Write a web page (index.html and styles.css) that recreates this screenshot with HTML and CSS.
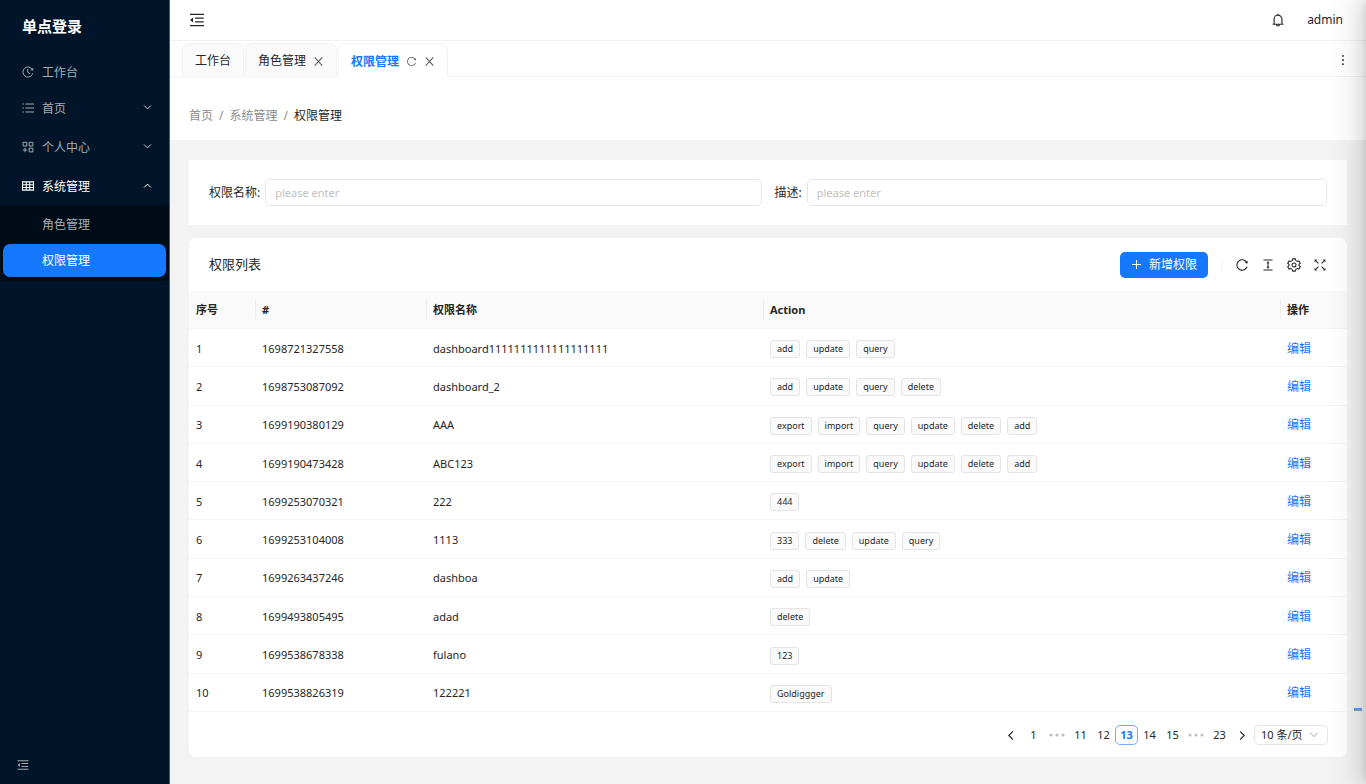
FILE: index.html
```html
<!DOCTYPE html>
<html lang="zh-CN">
<head>
<meta charset="utf-8">
<title>权限管理</title>
<link rel="stylesheet" href="styles.css">
</head>
<body>
<svg class="sprite" aria-hidden="true">
  <symbol id="fold" viewBox="0 0 1024 1024"><path fill="currentColor" d="M408 442h480c4.400 0 8-3.600 8-8v-56c0-4.400-3.600-8-8-8H408c-4.400 0-8 3.600-8 8v56c0 4.400 3.600 8 8 8zm-8 204c0 4.400 3.600 8 8 8h480c4.400 0 8-3.600 8-8v-56c0-4.400-3.600-8-8-8H408c-4.400 0-8 3.600-8 8v56zm504-486H120c-4.400 0-8 3.600-8 8v56c0 4.400 3.600 8 8 8h784c4.400 0 8-3.600 8-8v-56c0-4.400-3.600-8-8-8zm0 632H120c-4.400 0-8 3.600-8 8v56c0 4.400 3.600 8 8 8h784c4.400 0 8-3.600 8-8v-56c0-4.400-3.600-8-8-8zM115.400 518.900L271.700 642c5.800 4.600 14.400.5 14.400-6.900V388.900c0-7.400-8.500-11.500-14.400-6.900L115.400 505.100a8.740 8.740 0 000 13.800z"/></symbol>
  <symbol id="reload" viewBox="0 0 1024 1024"><path fill="currentColor" d="M909.1 209.300l-56.400 44.100C775.800 155.100 656.200 92 521.900 92 290 92 102.300 279.500 102 511.500 101.700 743.700 289.800 932 521.900 932c181.300 0 335.800-115 394.600-276.100 1.500-4.200-.7-8.900-4.900-10.300l-56.700-19.500a8 8 0 00-10.100 4.800c-1.800 5-3.800 10-5.900 14.900-17.300 41-42.100 77.800-73.700 109.400A344.770 344.770 0 01655.900 829c-42.300 17.900-87.400 27-133.800 27-46.500 0-91.500-9.100-133.800-27A341.500 341.500 0 01279 755.200a342.160 342.160 0 01-73.700-109.400c-17.900-42.400-27-87.400-27-133.900s9.100-91.500 27-133.900c17.300-41 42.100-77.800 73.700-109.400 31.600-31.600 68.400-56.400 109.300-73.800 42.300-17.900 87.400-27 133.800-27 46.500 0 91.500 9.100 133.800 27a341.500 341.500 0 01109.300 73.800c9.900 9.900 19.200 20.400 27.800 31.400l-60.200 47a8 8 0 003 14.100l175.600 43c5 1.200 9.900-2.600 9.900-7.700l.8-180.900c-.1-6.600-7.800-10.300-13-6.200z"/></symbol>
  <symbol id="height" viewBox="0 0 1024 1024"><path fill="currentColor" d="M840 836H184c-4.400 0-8 3.600-8 8v60c0 4.400 3.600 8 8 8h656c4.400 0 8-3.600 8-8v-60c0-4.400-3.600-8-8-8zm0-724H184c-4.400 0-8 3.600-8 8v60c0 4.400 3.600 8 8 8h656c4.400 0 8-3.600 8-8v-60c0-4.400-3.600-8-8-8zM610.800 378c6 0 9.400-7 5.700-11.700L515.700 238.700a7.140 7.140 0 00-11.300 0L403.600 366.300a7.230 7.230 0 005.700 11.700H476v268h-62.800c-6 0-9.400 7-5.700 11.700l100.800 127.500c2.900 3.700 8.500 3.700 11.300 0l100.800-127.500c3.700-4.700.4-11.700-5.700-11.700H548V378h62.800z"/></symbol>
  <symbol id="clock" viewBox="0 0 16 16"><g fill="none" stroke="currentColor" stroke-width="1.300"><path d="M13.500 11.800A6.700 6.700 0 1 1 13.300 4M7.700 4v4.500l3.200 1.800"/><path fill="currentColor" stroke="none" d="M15 2.300v4l-3.700-.9zM13 9.500l2 .4-.8 2z"/></g></symbol>
  <symbol id="list" viewBox="0 0 16 16"><path fill="none" stroke="currentColor" stroke-width="1.300" d="M4.500 2.700H16M4.500 8H16M4.500 13.300H16M.5 2.700h2M.5 8h2M.5 13.300h2"/></symbol>
  <symbol id="apps" viewBox="0 0 16 16"><path fill="none" stroke="currentColor" stroke-width="1.300" d="M1.400 1.700h5v5h-5zM9.500 1.700h5v5h-5zM9.500 9.500h5v5h-5zM4 9v6M1 12h6"/></symbol>
  <symbol id="grid" viewBox="0 0 16 16"><path fill="none" stroke="currentColor" stroke-width="1.400" d="M.7 2.500h14.600v11H.7zM.7 6.200h14.600M.7 9.900h14.600M5.700 2.500v11M10.300 2.500v11"/></symbol>
  <symbol id="down" viewBox="0 0 16 16"><path fill="none" stroke="currentColor" stroke-width="1.700" d="M2 4.500L8 10.500 14 4.500"/></symbol>
  <symbol id="close" viewBox="0 0 16 16"><path fill="none" stroke="currentColor" stroke-width="1.500" d="M2.500 2l11 12M13.500 2l-11 12"/></symbol>
  <symbol id="bell" viewBox="0 0 16 16"><path fill="none" stroke="currentColor" stroke-width="1.300" d="M8 .8v1.700M1.800 12.800h12.400M3.500 12.500V7a4.500 4.500 0 0 1 9 0v5.500M6.300 13.200a1.700 1.700 0 0 0 3.400 0"/></symbol>
  <symbol id="more" viewBox="0 0 16 16"><g fill="currentColor"><circle cx="8" cy="2.500" r="1.200"/><circle cx="8" cy="8" r="1.200"/><circle cx="8" cy="13.500" r="1.200"/></g></symbol>
  <symbol id="plus" viewBox="0 0 16 16"><path stroke="currentColor" stroke-width="1.400" d="M8 1.500v13M1.500 8h13"/></symbol>
  <symbol id="gear" viewBox="0 0 16 16"><g fill="none" stroke="currentColor" stroke-width="1.200" stroke-linejoin="round"><path d="M6.400 1h3.200l.5 2 1.500.9 2-.6 1.600 2.700-1.500 1.400v1.200l1.500 1.400-1.600 2.700-2-.6-1.500.9-.5 2H6.400l-.5-2-1.500-.9-2 .6L.8 10l1.500-1.400V7.400L.8 6l1.600-2.700 2 .6L5.900 3z"/><circle cx="8" cy="8" r="2.300"/></g></symbol>
  <symbol id="expand" viewBox="0 0 16 16"><g stroke="currentColor" stroke-width="1.200" fill="currentColor"><path d="M3 3l3.200 3.200M13 3L9.800 6.200M3 13l3.200-3.200M13 13L9.800 9.800"/><path stroke="none" d="M1.800 1.800h3L1.800 4.800zM14.200 1.800v3l-3-3zM1.800 14.200v-3l3 3zM14.200 14.200h-3l3-3z"/></g></symbol>
  <symbol id="dots" viewBox="0 0 16 6"><g fill="currentColor"><circle cx="2" cy="3" r="1.600"/><circle cx="8" cy="3" r="1.600"/><circle cx="14" cy="3" r="1.600"/></g></symbol>
</svg>

<div class="app">
  <aside class="side">
    <h1 class="brand">单点登录</h1>
    <nav class="menu">
      <a class="item" href="#"><svg><use href="#clock"/></svg><span>工作台</span></a>
      <button class="item item-group"><svg><use href="#list"/></svg><span>首页</span><svg class="arrow"><use href="#down"/></svg></button>
      <button class="item item-group"><svg><use href="#apps"/></svg><span>个人中心</span><svg class="arrow"><use href="#down"/></svg></button>
      <button class="item item-group open" aria-expanded="true"><svg><use href="#grid"/></svg><span>系统管理</span><svg class="arrow"><use href="#down"/></svg></button>
      <div class="sub">
        <a class="sub-item" href="#">角色管理</a>
        <a class="sub-item selected" href="#">权限管理</a>
      </div>
    </nav>
    <button class="side-fold" aria-label="收起菜单"><svg><use href="#fold"/></svg></button>
  </aside>

  <div class="main">
    <header class="top">
      <button class="icon-btn" aria-label="收起菜单"><svg class="i18"><use href="#fold"/></svg></button>
      <div class="user">
        <button class="icon-btn" aria-label="通知"><svg class="i14"><use href="#bell"/></svg></button>
        <a href="#" class="name">admin</a>
      </div>
    </header>
    <div class="tabs">
      <div class="tab"><a href="#">工作台</a></div>
      <div class="tab"><a href="#">角色管理</a><button class="tab-btn" aria-label="关闭"><svg><use href="#close"/></svg></button></div>
      <div class="tab active"><a href="#">权限管理</a><button class="tab-btn" aria-label="刷新"><svg><use href="#reload"/></svg></button><button class="tab-btn" aria-label="关闭"><svg><use href="#close"/></svg></button></div>
      <button class="icon-btn more" aria-label="更多"><svg class="i12"><use href="#more"/></svg></button>
    </div>
    <nav class="crumbs"><a href="#">首页</a><i>/</i><a href="#">系统管理</a><i>/</i><span>权限管理</span></nav>

    <main class="content">
      <form class="search">
        <div class="field"><label for="pname">权限名称:</label><input id="pname" type="text" placeholder="please enter"></div>
        <div class="field wide"><label for="pdesc">描述:</label><input id="pdesc" type="text" placeholder="please enter"></div>
      </form>

      <section class="card">
        <div class="toolbar">
          <h2>权限列表</h2>
          <button class="primary"><svg><use href="#plus"/></svg>新增权限</button>
          <span class="divider"></span>
          <div class="tools">
            <button class="icon-btn" aria-label="刷新"><svg class="i14"><use href="#reload"/></svg></button>
            <button class="icon-btn" aria-label="密度"><svg class="i14"><use href="#height"/></svg></button>
            <button class="icon-btn" aria-label="列设置"><svg class="i14"><use href="#gear"/></svg></button>
            <button class="icon-btn" aria-label="全屏"><svg class="i14"><use href="#expand"/></svg></button>
          </div>
        </div>
        <table>
          <colgroup><col class="c-index"><col class="c-id"><col class="c-name"><col><col class="c-op"></colgroup>
          <thead><tr><th>序号</th><th>#</th><th>权限名称</th><th>Action</th><th>操作</th></tr></thead>
          <tbody>
            <tr><td>1</td><td>1698721327558</td><td>dashboard1111111111111111111</td><td><span class="tag">add</span><span class="tag">update</span><span class="tag">query</span></td><td><a href="#">编辑</a></td></tr>
            <tr><td>2</td><td>1698753087092</td><td>dashboard_2</td><td><span class="tag">add</span><span class="tag">update</span><span class="tag">query</span><span class="tag">delete</span></td><td><a href="#">编辑</a></td></tr>
            <tr><td>3</td><td>1699190380129</td><td>AAA</td><td><span class="tag">export</span><span class="tag">import</span><span class="tag">query</span><span class="tag">update</span><span class="tag">delete</span><span class="tag">add</span></td><td><a href="#">编辑</a></td></tr>
            <tr><td>4</td><td>1699190473428</td><td>ABC123</td><td><span class="tag">export</span><span class="tag">import</span><span class="tag">query</span><span class="tag">update</span><span class="tag">delete</span><span class="tag">add</span></td><td><a href="#">编辑</a></td></tr>
            <tr><td>5</td><td>1699253070321</td><td>222</td><td><span class="tag">444</span></td><td><a href="#">编辑</a></td></tr>
            <tr><td>6</td><td>1699253104008</td><td>1113</td><td><span class="tag">333</span><span class="tag">delete</span><span class="tag">update</span><span class="tag">query</span></td><td><a href="#">编辑</a></td></tr>
            <tr><td>7</td><td>1699263437246</td><td>dashboa</td><td><span class="tag">add</span><span class="tag">update</span></td><td><a href="#">编辑</a></td></tr>
            <tr><td>8</td><td>1699493805495</td><td>adad</td><td><span class="tag">delete</span></td><td><a href="#">编辑</a></td></tr>
            <tr><td>9</td><td>1699538678338</td><td>fulano</td><td><span class="tag">123</span></td><td><a href="#">编辑</a></td></tr>
            <tr><td>10</td><td>1699538826319</td><td>122221</td><td><span class="tag">Goldiggger</span></td><td><a href="#">编辑</a></td></tr>
          </tbody>
        </table>
        <nav class="pager" aria-label="分页">
          <button aria-label="上一页"><svg class="prev"><use href="#down"/></svg></button>
          <button>1</button>
          <span class="gap"><svg><use href="#dots"/></svg></span>
          <button>11</button>
          <button>12</button>
          <button class="current">13</button>
          <button>14</button>
          <button>15</button>
          <span class="gap"><svg><use href="#dots"/></svg></span>
          <button>23</button>
          <button aria-label="下一页"><svg class="next"><use href="#down"/></svg></button>
          <div class="size"><select aria-label="每页条数"><option>10 条/页</option></select><svg><use href="#down"/></svg></div>
        </nav>
      </section>
    </main>
  </div>
  <div class="drawer-shadow"></div>
  <div class="handle"></div>
</div>
</body>
</html>
```

FILE: styles.css
```css
* { box-sizing: border-box; }
body {
  margin: 0;
  font: 11px/18px "Noto Sans", "Noto Sans CJK SC", sans-serif;
  color: #262626;
}
a { color: inherit; text-decoration: none; }
button, input, select { font: inherit; color: inherit; }
button { padding: 0; border: 0; background: none; }
svg { display: block; flex: none; }
h1, h2 { margin: 0; }
.sprite { position: absolute; width: 0; height: 0; }
.i18 { width: 18px; height: 18px; }
.i14 { width: 14px; height: 14px; }
.i12 { width: 12px; height: 12px; }
.icon-btn { display: flex; }

.app { position: relative; display: flex; min-height: 100vh; overflow: hidden; background: #f3f3f3; }

.side { flex: none; width: 170px; display: flex; flex-direction: column; background: #001529; color: #a6adb4; border-right: 1px solid #4d5b69; }
.brand { padding: 15px 22px 0; font-size: 15px; line-height: 22px; font-weight: 700; color: #fff; }
.menu { flex: 1; display: flex; flex-direction: column; padding-top: 18px; font-size: 12px; }
.item { display: flex; align-items: center; gap: 8px; height: 33px; padding: 0 17px 0 22px; text-align: left; }
.item svg { width: 12px; height: 12px; }
.item span { padding-top: 2px; }
.item .arrow { width: 9px; height: 9px; margin-left: auto; color: #d0d4d8; }
.item-group { height: 39px; }
.item.open, .item.open .arrow { color: #fff; }
.open .arrow { transform: rotate(180deg); }
.sub { display: flex; flex-direction: column; gap: 3px; padding: 3px 3px 4px; background: #000c17; }
.sub-item { height: 33px; padding-left: 39px; line-height: 34px; border-radius: 7px; }
.sub-item.selected { background: #1677ff; color: #fff; }
.side-fold { padding: 0 0 12px 16px; }
.side-fold svg { width: 14px; height: 14px; }

.main { flex: 1; min-width: 0; display: flex; flex-direction: column; }
.top { display: flex; justify-content: space-between; align-items: center; height: 40px; padding: 0 23px 0 18px; background: #fff; }
.user { display: flex; align-items: center; gap: 22px; font-size: 12px; }
.tabs { display: flex; align-items: flex-end; gap: 1px; height: 37px; padding: 0 18px 0 12px; background: #fff; border-top: 1px solid #f0f3f3; border-bottom: 1px solid #f2f2f2; font-size: 12px; }
.tab { display: flex; align-items: center; gap: 7px; height: 33px; padding: 2px 12px 0; border: 1px solid #f2f2f2; border-bottom: 0; border-radius: 7px 7px 0 0; background: #fafafa; }
.tab.active { height: 34px; margin-bottom: -1px; background: #fff; color: #1677ff; font-weight: 700; }
.tab-btn { color: #595959; }
.tab-btn svg { width: 11px; height: 11px; }
.more { margin: 0 -1px 10px auto; }
.crumbs { display: flex; gap: 6px; padding: 30px 19px 15px; background: #fff; color: #8c8c8c; font-size: 12px; }
.crumbs i { font-style: normal; }
.crumbs span { color: #262626; }
.content { padding: 20px 19px 27px; }

.search { display: flex; gap: 13px; padding: 19px 20px; background: #fff; font-size: 12px; }
.field { flex: 1 1 553px; display: flex; align-items: center; gap: 5px; min-width: 0; }
.field label { flex: none; padding-top: 1px; }
.field input { flex: 1; min-width: 0; height: 27px; padding: 0 9px; border: 1px solid #e6e6e6; border-radius: 5px; background: #fff; font-size: 11px; }
.field input::placeholder { color: #bfbfbf; opacity: 1; }

.card { margin-top: 13px; border-radius: 7px; background: #fff; padding-bottom: 12px; }
.toolbar { display: flex; align-items: center; height: 53px; padding: 0 20px; }
.toolbar h2 { flex: 1; padding-bottom: 2px; font-size: 13px; font-weight: 400; }
.primary { display: flex; align-items: center; gap: 7px; height: 26px; padding: 0 11px; border-radius: 5px; background: #1677ff; color: #fff; font-size: 12px; }
.primary svg { width: 11px; height: 11px; }
.divider { width: 1px; height: 12px; margin: 0 13px; background: #f2f2f2; }
.tools { display: flex; gap: 12px; }

table { width: 100%; height: 421px; table-layout: fixed; border-collapse: separate; border-spacing: 0; }
.c-index { width: 66px; }
.c-id { width: 171px; }
.c-name { width: 337px; }
.c-op { width: 67px; }
th, td { padding: 0 7px; text-align: left; border-bottom: 1px solid #f4f4f4; }
th { height: 38px; background: #fafafa; font-weight: 700; }
th + th { background-image: linear-gradient(#eee, #eee); background-repeat: no-repeat; background-size: 1px 19px; background-position: left center; }
td { height: 38px; padding-top: 2px; }
td a { color: #1677ff; font-size: 12px; }
.tag { display: inline-block; margin-right: 6px; padding: 0 6px; border: 1px solid #e4e4e4; border-radius: 3px; background: #fafafa; font-size: 9px; line-height: 16px; }

.pager { display: flex; justify-content: flex-end; align-items: center; padding: 13px 19px 0; }
.pager button { min-width: 23px; height: 20px; border-radius: 5px; }
.pager button svg { width: 11px; height: 11px; margin: auto; }
.pager .current { border: 1px solid #74adff; color: #1677ff; font-weight: 700; }
.prev { transform: rotate(90deg); }
.next { transform: rotate(-90deg); }
.gap { width: 24px; color: #bfbfbf; }
.gap svg { width: 16px; height: 6px; margin: auto; }
.size { display: flex; align-items: center; padding-right: 8px; height: 20px; border: 1px solid #e6e6e6; border-radius: 5px; }
.size select { appearance: none; padding: 0 6px; border: 0; background: none; line-height: 18px; }
.size svg { width: 10px; height: 10px; color: #bfbfbf; }

.drawer-shadow { position: absolute; top: 0; bottom: 0; left: 100%; width: 300px; box-shadow: -6px 0 16px rgba(0, 0, 0, .1), -3px 0 6px -4px rgba(0, 0, 0, .14), -9px 0 28px 8px rgba(0, 0, 0, .06); pointer-events: none; }
.handle { position: absolute; right: 4px; bottom: 73px; width: 8px; height: 3px; border-bottom: 1px solid #8c8c8c; background: #4a90f0; }
```
